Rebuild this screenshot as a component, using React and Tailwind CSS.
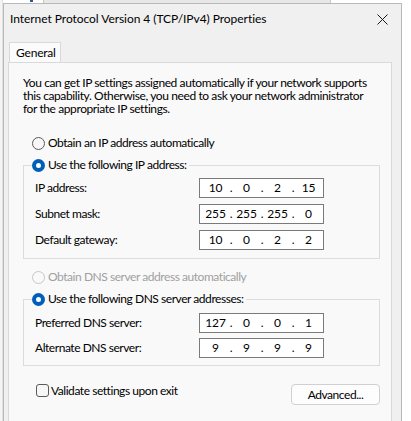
import React, { Fragment } from "react";

function Radio({ checked, disabled }) {
  if (checked) {
    return (
      <span className="w-[13px] h-[13px] shrink-0 rounded-full bg-[#005fb8] flex items-center justify-center">
        <span className="w-[5px] h-[5px] rounded-full bg-white" />
      </span>
    );
  }
  return (
    <span
      className={
        disabled
          ? "w-[13px] h-[13px] shrink-0 rounded-full border border-[#c6c6c6] bg-[#f9f9f9]"
          : "w-[13px] h-[13px] shrink-0 rounded-full border border-[#5b5b5b] bg-[#f7f7f7]"
      }
    />
  );
}

function IpBox({ parts }) {
  return (
    <div className="w-[125px] h-[20px] border border-[#7a7a7a] bg-white flex items-center pl-[4px] leading-[16px] tracking-[-0.2px]">
      {parts.map((p, i) => (
        <Fragment key={i}>
          {i > 0 && <span className="w-[8px] text-center">.</span>}
          <span className="w-[23px] text-center">{p}</span>
        </Fragment>
      ))}
    </div>
  );
}

function Row({ label, parts }) {
  return (
    <div className="flex items-center h-[20px]">
      <span className="w-[175px] pl-[11px]">{label}</span>
      <IpBox parts={parts} />
    </div>
  );
}

function Group({ legend, children, className }) {
  return (
    <fieldset className={"border border-[#dcdcdc] " + className}>
      <legend className="ml-[8px] pr-[2px] flex items-center gap-[3px] h-[16px] leading-[16px]">
        <Radio checked />
        <span>{legend}</span>
      </legend>
      {children}
    </fieldset>
  );
}

export default function App() {
  return (
    <div className="relative w-[411px] h-[421px] bg-white overflow-hidden font-['Lato',sans-serif] text-[12px] tracking-[-0.45px] text-black">
      {/* background window remnants */}
      <div className="absolute left-0 top-0 w-[3px] h-[421px] bg-[#f4f4f4] border-r border-[#e0e0e0]" />
      <div className="absolute left-[43px] top-0 w-[288px] h-[3px] bg-[#e8e8e8] border-x border-[#c8c8c8]" />
      <div className="absolute left-[30px] top-0 w-[3px] h-[2px] bg-[#2b5797]" />

      <div className="absolute left-[3px] top-[3px] w-[399px] h-[440px] border border-[#b9b9b9] bg-[#f0f0f0] flex flex-col">
        {/* title bar */}
        <div className="h-[30px] flex items-center justify-between pl-[6px] pr-[11px] shrink-0">
          <span className="leading-[16px] tracking-[-0.05px]">Internet Protocol Version 4 (TCP/IPv4) Properties</span>
          <svg width="11" height="11" viewBox="0 0 11 11" className="mr-[2px]">
            <path d="M0.5 0.5 L10.5 10.5 M10.5 0.5 L0.5 10.5" stroke="#1a1a1a" strokeWidth="1" fill="none" />
          </svg>
        </div>

        {/* tabs */}
        <div className="mt-[8px] ml-[4px] w-[384px] flex flex-col">
          <div className="flex">
            <div className="ml-[1px] w-[52px] h-[20px] bg-[#fbfbfb] border border-b-0 border-[#d9d9d9] flex items-center pl-[6px] leading-[16px] tracking-[-0.2px]">
              General
            </div>
          </div>
          <div className="h-[360px] border border-[#d9d9d9] bg-[#f9f9f9] pt-[13px] pl-[14px] pr-[11px] flex flex-col">
            <p className="leading-[13px] whitespace-nowrap tracking-[-0.4px]">
              You can get IP settings assigned automatically if your network supports
              <br />
              this capability. Otherwise, you need to ask your network administrator
              <br />
              for the appropriate IP settings.
            </p>

            <div className="mt-[20px] ml-[9px] flex items-center gap-[3px] h-[16px]">
              <Radio />
              <span>Obtain an IP address automatically</span>
            </div>

            <Group legend="Use the following IP address:" className="mt-[6px] pb-[8px]">
              <div className="mt-[5px] flex flex-col gap-[6px]">
                <Row label="IP address:" parts={["10", "0", "2", "15"]} />
                <Row label="Subnet mask:" parts={["255", "255", "255", "0"]} />
                <Row label="Default gateway:" parts={["10", "0", "2", "2"]} />
              </div>
            </Group>

            <div className="mt-[10px] ml-[9px] flex items-center gap-[3px] h-[16px] text-[#a0a0a0]">
              <Radio disabled />
              <span>Obtain DNS server address automatically</span>
            </div>

            <Group legend="Use the following DNS server addresses:" className="mt-[6px] pb-[7px]">
              <div className="mt-[6px] flex flex-col gap-[5px]">
                <Row label="Preferred DNS server:" parts={["127", "0", "0", "1"]} />
                <Row label="Alternate DNS server:" parts={["9", "9", "9", "9"]} />
              </div>
            </Group>

            <div className="mt-[18px] flex items-start justify-between">
              <div className="ml-[13px] flex items-center gap-[2px] h-[13px]">
                <span className="w-[13px] h-[13px] rounded-[3px] border border-[#5b5b5b] bg-[#f7f7f7]" />
                <span className="leading-[16px]">Validate settings upon exit</span>
              </div>
              <button className="w-[89px] h-[21px] rounded-[4px] border border-[#d0d0d0] bg-[#fdfdfd] flex items-center justify-center leading-[16px]">
                Advanced...
              </button>
            </div>
          </div>
        </div>
      </div>
    </div>
  );
}
